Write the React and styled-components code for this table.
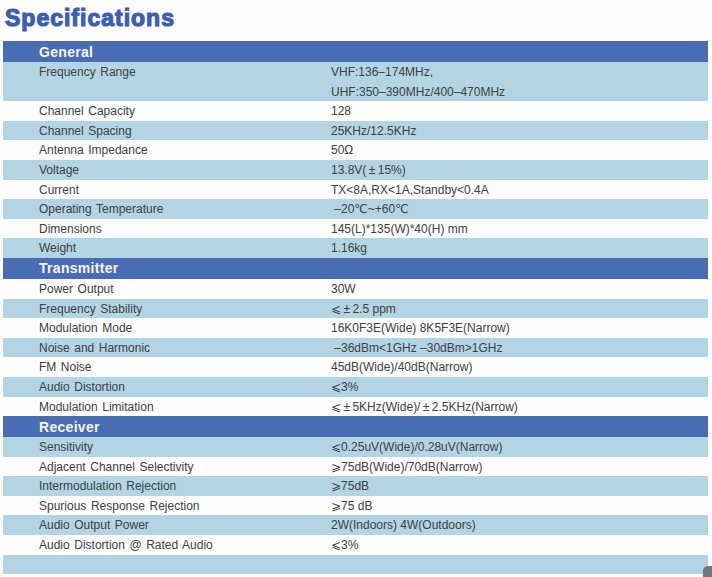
import React from 'react'
import styled, { createGlobalStyle } from 'styled-components'

const GlobalStyle = createGlobalStyle`
  body {
    margin: 0;
    background: #fdfdfd;
    font-family: "Liberation Sans", "DejaVu Sans", Arial, sans-serif;
  }
`

const Page = styled.div`
  position: relative;
  width: 712px;
  height: 577px;
  overflow: hidden;
  background: #fdfdfd;
`

const Title = styled.h1`
  margin: 0 0 9px 0;
  padding: 4px 0 0 5px;
  height: 28px;
  font-size: 23px;
  line-height: 28px;
  font-weight: 700;
  letter-spacing: 1px;
  color: #3d5fae;
  -webkit-text-stroke: 1.2px #3d5fae;
`

const Table = styled.div`
  margin: 0 4px 0 3px;
  display: flex;
  flex-direction: column;
`

const SectionHeader = styled.div`
  height: 21px;
  display: flex;
  align-items: center;
  padding-left: 36px;
  background: #4a6cb3;
  color: #f4f7fc;
  font-size: 14px;
  font-weight: 700;
  letter-spacing: 0.3px;
`

const Row = styled.div`
  display: grid;
  grid-template-columns: 328px 1fr;
  background: ${p => (p.$shade ? '#b2d4e3' : '#fdfdfd')};
  color: #404040;
  font-size: 12px;
  line-height: 19.6px;
  min-height: 19.6px;
`

const Label = styled.div`
  padding-left: 36px;
  padding-top: 1px;
  margin-bottom: -1px;
  word-spacing: 1.2px;
`

const Value = styled.div`
  white-space: pre;
  padding-top: 1px;
  margin-bottom: -1px;
`

const Corner = styled.div`
  position: absolute;
  right: -4px;
  bottom: -4px;
  width: 13px;
  height: 15px;
  border-radius: 5px 0 0 0;
  background: #6f767c;
`

const sections = [
  {
    title: 'General',
    rows: [
      ['Frequency Range', 'VHF:136–174MHz,\nUHF:350–390MHz/400–470MHz'],
      ['Channel Capacity', '128'],
      ['Channel Spacing', '25KHz/12.5KHz'],
      ['Antenna Impedance', '50Ω'],
      ['Voltage', '13.8V(\u2009±\u200915%)'],
      ['Current', 'TX<8A,RX<1A,Standby<0.4A'],
      ['Operating Temperature', ' –20℃~+60℃'],
      ['Dimensions', '145(L)*135(W)*40(H) mm'],
      ['Weight', '1.16kg'],
    ],
    startShade: true,
  },
  {
    title: 'Transmitter',
    rows: [
      ['Power Output', '30W'],
      ['Frequency Stability', '⩽\u2009±\u20092.5 ppm'],
      ['Modulation Mode', '16K0F3E(Wide) 8K5F3E(Narrow)'],
      ['Noise and Harmonic', ' –36dBm<1GHz –30dBm>1GHz'],
      ['FM Noise', '45dB(Wide)/40dB(Narrow)'],
      ['Audio Distortion', '⩽3%'],
      ['Modulation Limitation', '⩽\u2009±\u20095KHz(Wide)/\u2009±\u20092.5KHz(Narrow)'],
    ],
    startShade: false,
  },
  {
    title: 'Receiver',
    rows: [
      ['Sensitivity', '⩽0.25uV(Wide)/0.28uV(Narrow)'],
      ['Adjacent Channel Selectivity', '⩾75dB(Wide)/70dB(Narrow)'],
      ['Intermodulation Rejection', '⩾75dB'],
      ['Spurious Response Rejection', '⩾75 dB'],
      ['Audio Output Power', '2W(Indoors) 4W(Outdoors)'],
      ['Audio Distortion @ Rated Audio', '⩽3%'],
      ['', ''],
    ],
    startShade: true,
  },
]

const Section = ({ title, rows, startShade }) => (
  <>
    <SectionHeader>{title}</SectionHeader>
    {rows.map(([label, value], i) => (
      <Row key={title + i} $shade={startShade ? i % 2 === 0 : i % 2 === 1}>
        <Label>{label}</Label>
        <Value>{value}</Value>
      </Row>
    ))}
  </>
)

const App = () => (
  <Page>
    <GlobalStyle />
    <Title>Specifications</Title>
    <Table>
      {sections.map(s => <Section key={s.title} {...s} />)}
    </Table>
    <Corner />
  </Page>
)

export default App
